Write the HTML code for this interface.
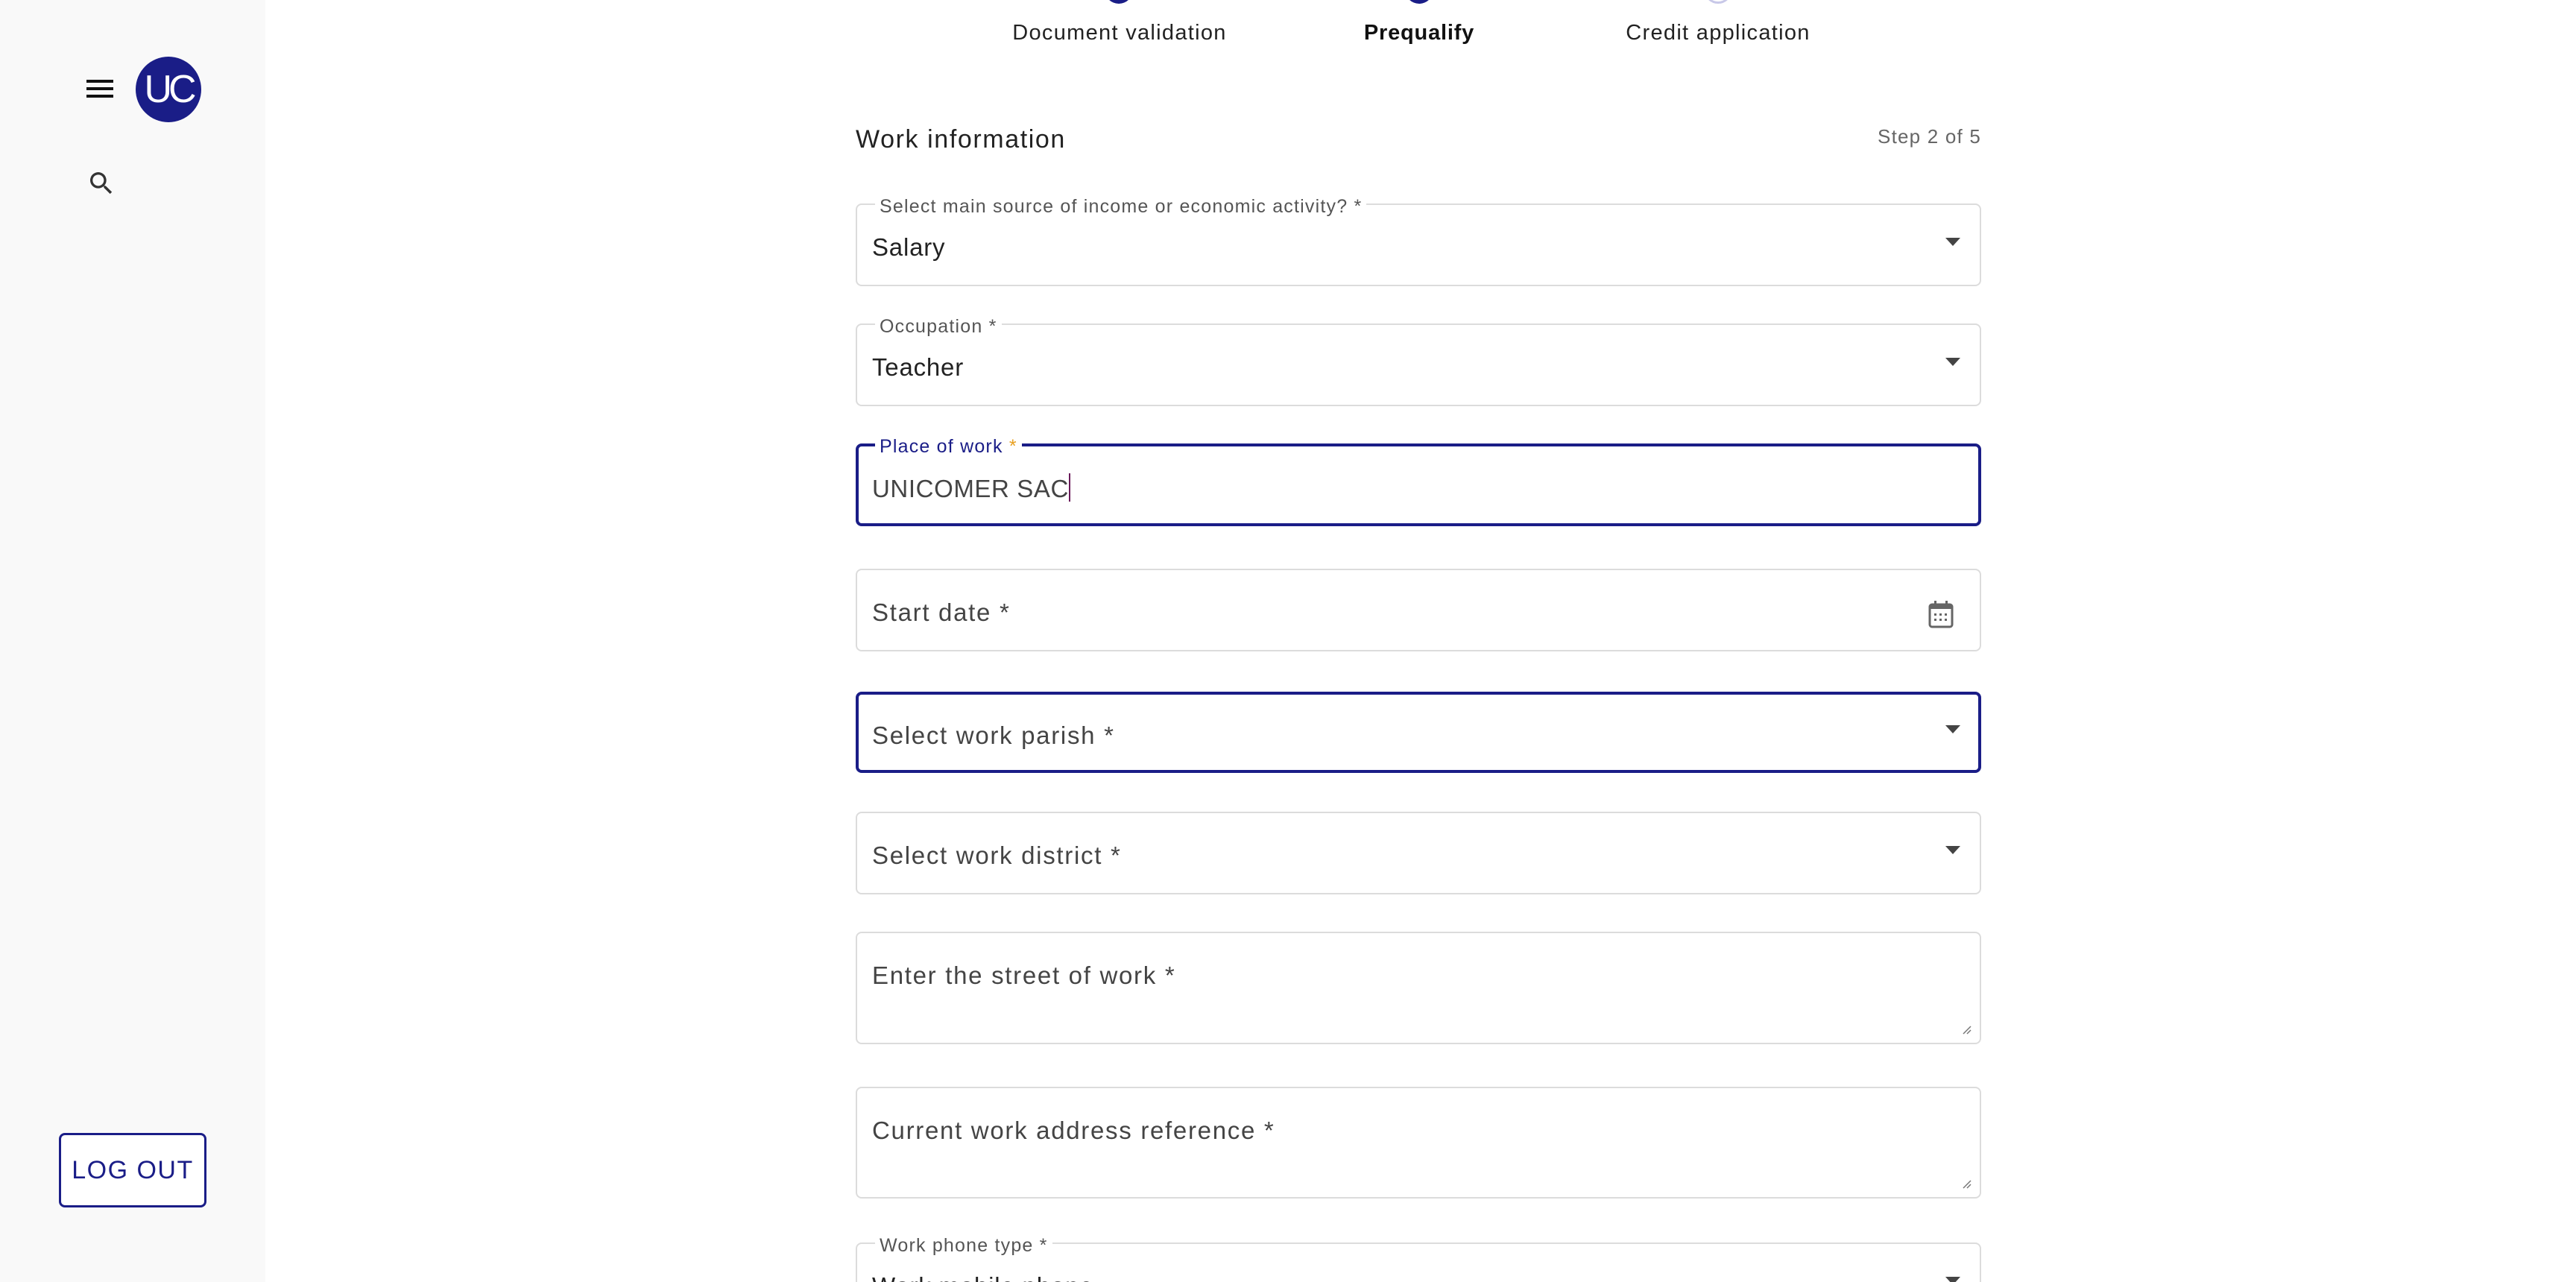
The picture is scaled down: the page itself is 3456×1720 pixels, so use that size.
<!DOCTYPE html>
<html><head><meta charset="utf-8">
<style>
*{box-sizing:border-box;margin:0;padding:0}
html,body{width:3456px;height:1720px;overflow:hidden;background:#fff;font-family:"Liberation Sans",Arial,sans-serif;color:#222}
#wrap{position:relative;width:3456px;height:1720px;overflow:hidden}
.side{position:absolute;left:0;top:0;width:356px;height:1720px;background:#f9f9f9}
.abs{position:absolute}
.uc{left:182px;top:76px;width:88px;height:88px;border-radius:50%;background:#1a1d87;color:#fff;font-size:52px;text-align:center;line-height:88px;letter-spacing:-5px;font-weight:300}
.logout{left:79px;top:1520px;width:198px;height:100px;border:3px solid #1a1d87;border-radius:8px;background:#fff;color:#1a1d87;font-size:34px;text-align:center;line-height:94px;letter-spacing:1.5px}
.step{top:28px;font-size:29px;letter-spacing:1.3px;color:#222;transform:translateX(-50%);white-space:nowrap}
.dot{width:38px;height:38px;border-radius:50%;top:-33px;background:#1a1d87}
.f{position:absolute;left:1148px;width:1510px;border:2px solid #dcdcdc;border-radius:8px;background:#fff}
.f.foc{border:4px solid #1a1d87}
.lab{position:absolute;left:24px;top:-11px;background:#fff;padding:0 6px;font-size:25px;color:#555;letter-spacing:1.2px;line-height:26px;white-space:nowrap}
.val{position:absolute;left:20px;font-size:33px;letter-spacing:0.8px;color:#222;white-space:nowrap}
.ph{position:absolute;left:20px;font-size:33px;letter-spacing:1.7px;color:#444;white-space:nowrap}
.arr{position:absolute;right:26px;width:0;height:0;border-left:10px solid transparent;border-right:10px solid transparent;border-top:11px solid #444}
.rs{position:absolute;right:10px;bottom:10px}
</style></head><body><div id="wrap">
<div class="side"></div>
<svg class="abs" style="left:114px;top:104px" width="40" height="30" viewBox="0 0 40 30"><rect x="2" y="3" width="36" height="4" fill="#111"/><rect x="2" y="13" width="36" height="4" fill="#111"/><rect x="2" y="23" width="36" height="4" fill="#111"/></svg>
<div class="abs uc">UC</div>
<svg class="abs" style="left:116px;top:226px" width="40" height="40" viewBox="0 0 24 24"><path fill="#333" d="M15.5 14h-.79l-.28-.27A6.470 6.470 0 0016 9.5 6.5 6.5 0 109.5 16c1.61 0 3.090-.59 4.23-1.57l.27.28v.79l5 4.99L20.49 19l-4.99-5zm-6 0C7.01 14 5 11.990 5 9.5S7.01 5 9.5 5 14 7.01 14 9.5 11.99 14 9.5 14z"/></svg>
<div class="abs logout">LOG OUT</div>

<div class="abs dot" style="left:1482px"></div>
<div class="abs dot" style="left:1885px"></div>
<div class="abs dot" style="left:2286px;background:#fff;border:3px solid #c8c8e8"></div>
<div class="abs step" style="left:1502px">Document validation</div>
<div class="abs step" style="left:1904px;font-weight:bold;color:#111;letter-spacing:0.8px">Prequalify</div>
<div class="abs step" style="left:2305px">Credit application</div>

<div class="abs" style="left:1148px;top:168px;font-size:34px;letter-spacing:1.6px;color:#222">Work information</div>
<div class="abs" style="left:2496px;top:168px;font-size:26px;letter-spacing:1.2px;color:#666;width:162px;text-align:right;white-space:nowrap">Step 2 of 5</div>

<div class="f" style="top:273px;height:111px"><div class="lab">Select main source of income or economic activity? *</div><div class="val" style="top:38px">Salary</div><div class="arr" style="top:44px"></div></div>
<div class="f" style="top:434px;height:111px"><div class="lab">Occupation *</div><div class="val" style="top:38px">Teacher</div><div class="arr" style="top:44px"></div></div>
<div class="f foc" style="top:595px;height:111px"><div class="lab" style="color:#1a1d87;left:22px;top:-13px">Place of work <span style="color:#e8a020">*</span></div><div class="val" style="top:36px;left:18px;color:#444;letter-spacing:0.6px">UNICOMER SAC<span style="display:inline-block;width:2px;height:38px;background:#6a1b5a;vertical-align:-6px"></span></div></div>
<div class="f" style="top:763px;height:111px"><div class="ph" style="top:38px">Start date *</div>
<svg style="position:absolute;left:1437px;top:40px" width="34" height="38" viewBox="0 0 34 38"><rect x="2" y="6" width="30" height="30" rx="3" fill="none" stroke="#666" stroke-width="3"/><rect x="2" y="6" width="30" height="6" fill="#666"/><rect x="8" y="1" width="3" height="8" fill="#666"/><rect x="23" y="1" width="3" height="8" fill="#666"/><g fill="#666"><rect x="8" y="18" width="3" height="3"/><rect x="15" y="18" width="3" height="3"/><rect x="22" y="18" width="3" height="3"/><rect x="8" y="25" width="3" height="3"/><rect x="15" y="25" width="3" height="3"/><rect x="22" y="25" width="3" height="3"/></g></svg></div>
<div class="f foc" style="top:928px;height:109px"><div class="ph" style="top:36px;left:18px">Select work parish *</div><div class="arr" style="top:41px;right:24px"></div></div>
<div class="f" style="top:1089px;height:111px"><div class="ph" style="top:38px">Select work district *</div><div class="arr" style="top:44px"></div></div>
<div class="f" style="top:1250px;height:151px"><div class="ph" style="top:38px">Enter the street of work *</div><svg class="rs" width="16" height="16" viewBox="0 0 16 16"><path d="M14 4L4 14M14 9L9 14" stroke="#777" stroke-width="1.5"/></svg></div>
<div class="f" style="top:1458px;height:150px"><div class="ph" style="top:38px">Current work address reference *</div><svg class="rs" width="16" height="16" viewBox="0 0 16 16"><path d="M14 4L4 14M14 9L9 14" stroke="#777" stroke-width="1.5"/></svg></div>
<div class="f" style="top:1667px;height:111px"><div class="lab">Work phone type *</div><div class="val" style="top:38px">Work mobile phone</div><div class="arr" style="top:44px"></div></div>
</div></body></html>
